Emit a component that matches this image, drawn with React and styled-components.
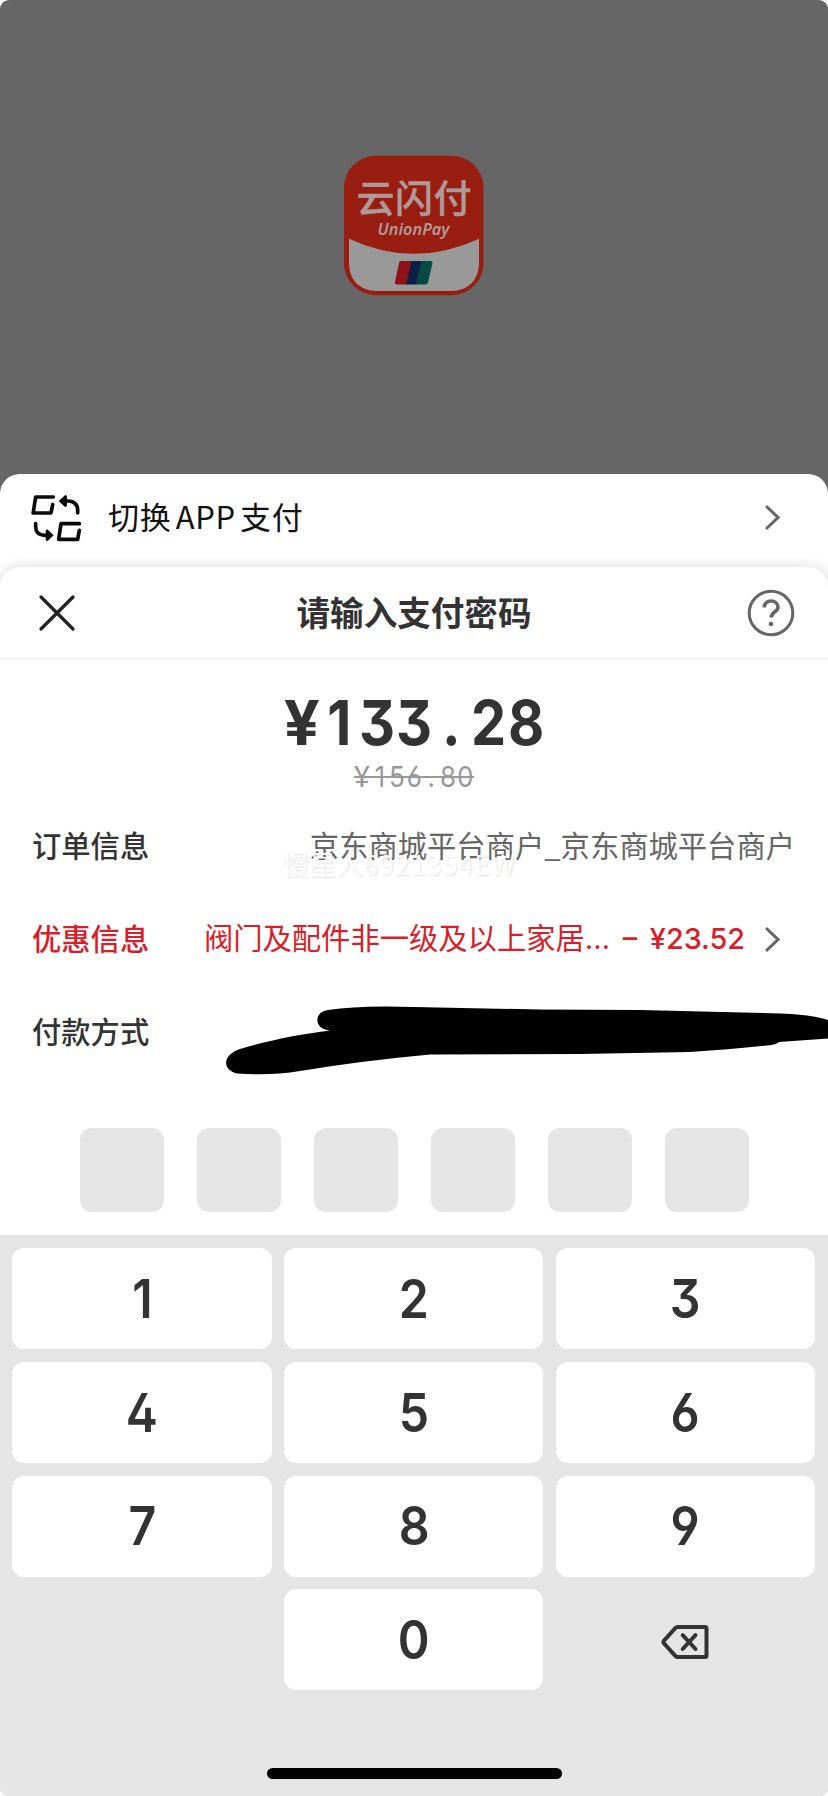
import React from 'react';
import styled, { createGlobalStyle } from 'styled-components';

const KEYS = ['1', '2', '3', '4', '5', '6', '7', '8', '9', '', '0', 'delete'];

function Logo() {
  return (
    <svg width="160" height="160" viewBox="0 0 160 160">
      <rect x="10" y="9.7" width="139.5" height="139.5" rx="32" fill="#991e12" />
      <path
        d="M15 92.7Q80 123 145 92.7V117C145 134 134 145 117 145H43C26 145 15 134 15 117Z"
        fill="#999"
      />
      <g fill="#b09a98" fontFamily="'Noto Sans CJK SC', sans-serif" fontWeight="500">
        <text
          x="22.5"
          y="65.5"
          fontSize="38"
          textLength="115"
          stroke="#b09a98"
          strokeWidth="0.4"
          strokeLinejoin="round"
        >
          云闪付
        </text>
        <text
          x="43.5"
          y="88.8"
          fontSize="16.2"
          fontFamily="'Noto Sans', sans-serif"
          fontWeight="600"
          fontStyle="italic"
          textLength="72"
          lengthAdjust="spacingAndGlyphs"
        >
          UnionPay
        </text>
      </g>
      <path d="M67 115H78L72.5 138.5H62.5Q60.3 138.5 61 136L65 117Q65.4 115 67 115Z" fill="#8e1218" />
      <path d="M77.5 115H88L82.5 138.5H72Z" fill="#0c1f45" />
      <path d="M87.5 115H96.5Q99 115 98.4 117.5L94 136.5Q93.4 138.5 91.5 138.5H82Z" fill="#054a42" />
    </svg>
  );
}

function SwitchIcon() {
  return (
    <svg width="52" height="50" viewBox="90 98 156 150" fill="none" stroke="#0a0a0a" strokeWidth="11">
      <g strokeLinecap="round" strokeLinejoin="round">
        <path d="M160 110H107L99.5 158H153L158 133" />
        <path d="M238 190H183L176 237H233L238 210" />
        <path d="M233 158V150Q233 123 203 122H190" />
        <path d="M107 190V199Q107 224 134 225H148" />
      </g>
      <path d="M176 122L196 104Q201 104 201 110V134Q201 140 195 140Z" fill="#0a0a0a" stroke="none" />
      <path d="M161 225L142 207Q137 208 137 213V237Q137 242 142 243Z" fill="#0a0a0a" stroke="none" />
    </svg>
  );
}

function Chevron() {
  return (
    <svg width="18" height="28" viewBox="0 0 18 28" fill="none">
      <path d="M3 3L14 13.5L3 24" stroke="#666" strokeWidth="3.1" strokeLinecap="round" />
    </svg>
  );
}

function CloseIcon() {
  return (
    <svg width="38" height="38" viewBox="0 0 38 38" fill="none">
      <path d="M3 3L35 35M35 3L3 35" stroke="#222" strokeWidth="3.3" strokeLinecap="round" />
    </svg>
  );
}

function HelpIcon() {
  return (
    <svg width="48" height="48" viewBox="0 0 48 48" fill="none">
      <circle cx="24" cy="24" r="21.8" stroke="#666" strokeWidth="3" />
      <path
        d="M17.2 18.6C17.2 14.6 20 12 24 12C28 12 31 14.6 31 18.2C31 23 24.2 22.5 24.2 28.6"
        stroke="#666"
        strokeWidth="3.6"
      />
      <circle cx="24" cy="35" r="2.3" fill="#666" />
    </svg>
  );
}

function DeleteIcon() {
  return (
    <svg width="50" height="36" viewBox="0 0 50 36" fill="none" stroke="#333" strokeWidth="4">
      <path d="M17.5 3H45Q46.5 3 46.5 4.5V31.5Q46.5 33 45 33H17.5Q16.5 33 15.5 32L3.7 19Q3 18 3.7 17L15.5 4Q16.5 3 17.5 3Z" />
      <path d="M22.7 11.2L35.5 25M35.5 11.2L22.7 25" strokeLinecap="round" />
    </svg>
  );
}

function Scribble() {
  return (
    <ScribbleSvg width="604" height="72" viewBox="224 1004 604 72">
      <path d="M828 1020C815 1016 800 1014 780 1013.5L640 1010L540 1009.5L414 1007Q360 1005 328 1010C313 1012 314 1030 330 1030.5C300 1034 262 1042 240 1049C222 1055 222 1070 237 1073.5Q270 1076 300 1071Q360 1061 430 1054.5L580 1054L690 1052Q725 1050 772 1045Q777 1044 779 1042L828 1038.5Z" />
    </ScribbleSvg>
  );
}

// every character, the dot included, takes the same width
function Digits({ children }) {
  return [...children].map((char, i) => (
    <Digit key={i} $wide={char === '¥'}>
      <span>{char}</span>
    </Digit>
  ));
}

export default function App() {
  return (
    <Frame>
      <GlobalStyle />
      <Screen>
        <Backdrop>
          <Logo />
        </Backdrop>
        <SwitchSheet>
          <SwitchRow>
            <SwitchIcon />
            <SwitchLabel>切换 APP 支付</SwitchLabel>
            <Chevron />
          </SwitchRow>
          <PaySheet>
            <Header>
              <CloseIcon />
              <Title>请输入支付密码</Title>
              <HelpIcon />
            </Header>
            <Price>
              <Digits>¥133.28</Digits>
            </Price>
            <OldPrice>
              <Strike>
                <Digits>¥156.80</Digits>
              </Strike>
            </OldPrice>
            <Row>
              <Label>订单信息</Label>
              <Value>京东商城平台商户_京东商城平台商户</Value>
              <Watermark>
                慢星人<span>6921354EW</span>
              </Watermark>
            </Row>
            <Row $accent>
              <Label $accent>优惠信息</Label>
              <Value>
                阀门及配件非一级及以上家居<Ellipsis>…</Ellipsis>
              </Value>
              <Discount>– ¥23.52</Discount>
              <Chevron />
            </Row>
            <Row>
              <Label>付款方式</Label>
              <Scribble />
            </Row>
            <PinRow>
              {[0, 1, 2, 3, 4, 5].map((i) => (
                <PinBox key={i} />
              ))}
            </PinRow>
            <Keypad>
              {KEYS.map((key, i) => (
                <Key key={i} $blank={key === '' || key === 'delete'}>
                  {key === 'delete' ? <DeleteIcon /> : <span>{key}</span>}
                </Key>
              ))}
            </Keypad>
            <HomeArea>
              <HomeBar />
            </HomeArea>
          </PaySheet>
        </SwitchSheet>
      </Screen>
    </Frame>
  );
}

const GlobalStyle = createGlobalStyle`
  *, *::before, *::after {
    box-sizing: border-box;
  }
  body {
    margin: 0;
    background: #fff;
    font-family: 'Noto Sans CJK SC', sans-serif;
    color: #333;
  }
  svg {
    display: block;
    flex-shrink: 0;
  }
`;

const Frame = styled.div`
  width: 828px;
  height: 1796px;
  background: #fff;
`;

const Screen = styled.main`
  display: flex;
  flex-direction: column;
  height: 100%;
  border-radius: 9px;
  overflow: hidden;
  background: #666;
`;

const Backdrop = styled.div`
  height: 474px;
  flex-shrink: 0;
  padding-top: 146px;
  display: flex;
  justify-content: center;
  align-items: flex-start;
`;

const SwitchSheet = styled.section`
  flex: 1;
  display: flex;
  flex-direction: column;
  background: #fff;
  border-radius: 20px 20px 0 0;
`;

const SwitchRow = styled.div`
  height: 93px;
  padding: 0 46px 5px 30px;
  display: flex;
  align-items: center;
`;

const SwitchLabel = styled.span`
  flex: 1;
  margin-left: 26px;
  padding-bottom: 5px;
  font-size: 31px;
  letter-spacing: 0.7px;
  word-spacing: -3.4px;
  line-height: 1;
  color: #111;
`;

const PaySheet = styled.section`
  flex: 1;
  display: flex;
  flex-direction: column;
  background: #fff;
  border-radius: 20px 20px 0 0;
  box-shadow: 0 0 14px rgba(0, 0, 0, 0.16);
`;

const Header = styled.header`
  height: 93px;
  padding: 0 33px 0 38px;
  border-bottom: 2px solid #f3f3f3;
  display: flex;
  align-items: center;
  justify-content: space-between;
`;

const Title = styled.h1`
  margin: 0 0 0 5px;
  padding-bottom: 1px;
  font-size: 33.6px;
  line-height: 1;
  font-weight: 700;
`;

const Digit = styled.span`
  flex: none;
  display: flex;
  justify-content: center;

  span {
    transform: scaleX(${(props) => (props.$wide ? 1.02 : 0.9)});
  }
`;

const Price = styled.div`
  height: 98px;
  padding-top: 26px;
  display: flex;
  justify-content: center;
  font: 700 62px/74px Inter, sans-serif;
  font-feature-settings: 'cv03', 'cv04', 'cv09', 'ss01';

  ${Digit} {
    width: 37.3px;
  }
`;

const OldPrice = styled.div`
  height: 42px;
  display: flex;
  justify-content: center;
  font: 400 29px/38px Inter, sans-serif;
  font-feature-settings: 'cv03', 'cv04', 'cv09', 'ss01';
  color: #999;

  ${Digit} {
    width: 17.2px;
  }
`;

const Strike = styled.s`
  height: 38px;
  display: flex;
  text-decoration: none;
  background: linear-gradient(#999, #999) center 18px / 100% 2px no-repeat;
`;

const Row = styled.div`
  position: relative;
  height: 93px;
  padding: 0 ${(props) => (props.$accent ? 46 : 33)}px 0 32px;
  display: flex;
  align-items: center;
  font-size: 29.3px;
  line-height: 1;
  color: ${(props) => (props.$accent ? '#d81e28' : '#666')};
`;

const Label = styled.span`
  padding-bottom: 4px;
  font-weight: 500;
  color: ${(props) => (props.$accent ? '#d81e28' : '#333')};
`;

const Value = styled.span`
  margin-left: auto;
  padding-bottom: 4px;
  white-space: nowrap;
`;

const Ellipsis = styled.span`
  display: inline-block;
  width: 33px;
  font-family: Inter, sans-serif;
`;

const Discount = styled.span`
  margin: 0 19px 0 5px;
  padding-bottom: 1px;
  font: 500 28.8px/1 Inter, sans-serif;
  word-spacing: 5px;
  white-space: nowrap;
`;

/* account tag laid over the order row */
const Watermark = styled.div`
  position: absolute;
  left: 282px;
  top: 50px;
  font-size: 27px;
  white-space: nowrap;
  color: #fff;
  text-shadow: 1px 1px 2px rgba(0, 0, 0, 0.12);

  span {
    letter-spacing: 0.9px;
  }
`;

const ScribbleSvg = styled.svg`
  position: absolute;
  left: 224px;
  top: 18px;
`;

const PinRow = styled.div`
  height: 156px;
  padding: 49px 0 0 1px;
  display: flex;
  justify-content: center;
  gap: 33px;
`;

const PinBox = styled.div`
  width: 84px;
  height: 84px;
  border-radius: 12px;
  background: #e5e5e5;
`;

const Keypad = styled.div`
  padding: 13px 13px 0 12.4px;
  display: grid;
  grid-template-columns: repeat(3, 1fr);
  grid-auto-rows: 101px;
  gap: 12.8px 12.4px;
  background: #e5e5e5;
`;

const Key = styled.div`
  display: flex;
  align-items: center;
  justify-content: center;
  padding-top: ${(props) => (props.$blank ? 5 : 0)}px;
  border-radius: 12px;
  background: ${(props) => (props.$blank ? 'transparent' : '#fff')};
  font: 600 53.6px/1 Inter, sans-serif;
  font-feature-settings: 'cv03', 'cv04', 'cv09', 'ss01';

  span {
    transform: scaleX(0.9);
  }
`;

const HomeArea = styled.div`
  flex: 1;
  padding-bottom: 17px;
  display: flex;
  align-items: flex-end;
  justify-content: center;
  background: #e5e5e5;
`;

const HomeBar = styled.div`
  width: 295px;
  height: 11px;
  border-radius: 6px;
  background: #000;
`;
